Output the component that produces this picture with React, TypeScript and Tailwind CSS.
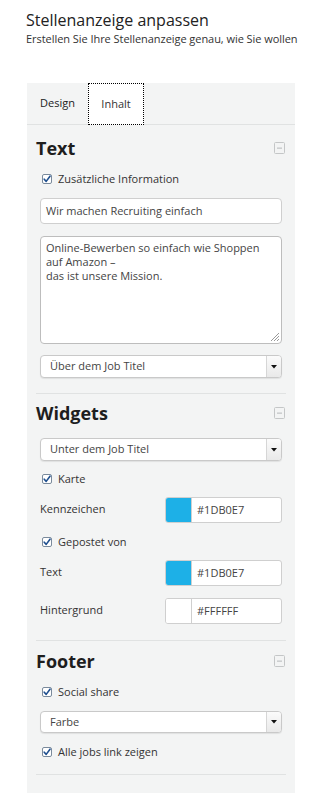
import React from "react";

const font = { fontFamily: '"Open Sans", "Liberation Sans", sans-serif' };

function Check({ label }: { label: string }) {
  return (
    <div className="flex items-center h-[16px] pl-[2px]">
      <svg width="10" height="10" viewBox="0 0 10 10" className="shrink-0">
        <rect x="0.5" y="0.5" width="9" height="9" rx="1.5" fill="#fff" stroke="#7a8a9c" />
        <path d="M2.2 5.2 L4.2 7.4 L8 2.2" fill="none" stroke="#1f4f8f" strokeWidth="1.6" strokeLinecap="round" strokeLinejoin="round" />
      </svg>
      <span className="ml-[6px] text-[11px] text-[#333]">{label}</span>
    </div>
  );
}

function Heading({ title }: { title: string }) {
  return (
    <div className="flex items-center justify-between h-[24px]">
      <span className="text-[18px] font-bold text-[#1e1e1e] leading-[24px]">{title}</span>
      <svg width="11" height="12" viewBox="0 0 11 12" className="mr-[1px]">
        <rect x="0.5" y="0.5" width="10" height="11" rx="1" fill="none" stroke="#c4c6c7" />
        <rect x="3" y="5.5" width="5" height="1.3" fill="#c4c6c7" />
      </svg>
    </div>
  );
}

function Select({ value, h = 23 }: { value: string; h?: number }) {
  return (
    <div
      className={`flex items-stretch mx-[4px] rounded-[4px] border border-[#c9c9c9] bg-white shadow-[0_1px_1px_rgba(0,0,0,0.08)] ${h === 22 ? "h-[22px]" : "h-[23px]"}`}
    >
      <div className="flex-1 flex items-center pl-[9px] text-[11px] text-[#444]">{value}</div>
      <div className="w-[15px] flex items-center justify-center border-l border-[#d6d6d6] bg-gradient-to-b from-[#fbfbfb] to-[#e9e9e9] rounded-r-[3px]">
        <svg width="6" height="4" viewBox="0 0 6 4">
          <path d="M0 0 L6 0 L3 3.5 Z" fill="#111" />
        </svg>
      </div>
    </div>
  );
}

function ColorRow({ label, color, value }: { label: string; color: string; value: string }) {
  return (
    <div className="flex items-center justify-between mx-[4px] h-[26px]">
      <span className="text-[11px] text-[#333] -mt-[1px]">{label}</span>
      <div className="flex w-[117px] h-[26px] rounded-[3px] border border-[#cfcfcf] bg-white overflow-hidden">
        <div className="w-[26px] border-r border-[#cfcfcf]" style={{ background: color }} />
        <div className="flex items-center pl-[5px] text-[11px] text-[#444]">{value}</div>
      </div>
    </div>
  );
}

export default function App() {
  return (
    <div className="w-[309px] h-[802px] bg-white" style={font}>
      <div className="pl-[26px] pt-[10px]">
        <div className="text-[16px] leading-[20px] text-[#222]">Stellenanzeige anpassen</div>
        <div className="text-[11px] leading-[15px] text-[#333] mt-[1px] tracking-[-0.05px]">
          Erstellen Sie Ihre Stellenanzeige genau, wie Sie wollen
        </div>
      </div>

      <div className="ml-[27px] w-[268px] mt-[37px] bg-[#f3f4f4] pb-[18px]">
        <div className="flex h-[42px] border-b border-[#e0e2e2]">
          <div className="w-[61px] flex items-center justify-center text-[11px] text-[#222]">Design</div>
          <div className="w-[56px] h-[42px] flex items-center justify-center bg-white border border-dotted border-black text-[11px] text-[#333]">
            Inhalt
          </div>
        </div>

        <div className="px-[9px]">
          {/* Text section */}
          <div className="pt-[11px]">
            <Heading title="Text" />
            <div className="mt-[11px] mx-[4px]">
              <Check label="Zusätzliche Information" />
            </div>
            <div className="mt-[11px] mx-[4px] h-[26px] rounded-[4px] border border-[#cfcfcf] bg-white flex items-center pl-[5px] text-[11px] text-[#444]">
              Wir machen Recruiting einfach
            </div>
            <div className="mt-[12px] mx-[4px] h-[108px] rounded-[4px] border border-[#bdbdbd] bg-white pl-[5px] pt-[4px] text-[11px] leading-[14px] text-[#444] relative">
              <div>Online-Bewerben so einfach wie Shoppen</div>
              <div>auf Amazon –</div>
              <div>das ist unsere Mission.</div>
              <svg width="10" height="10" viewBox="0 0 10 10" className="absolute right-[1px] bottom-[1px]">
                <path d="M9 1 L1 9 M9 4 L4 9 M9 7 L7 9" stroke="#9a9a9a" strokeWidth="1" />
              </svg>
            </div>
            <div className="mt-[11px]">
              <Select value="Über dem Job Titel" />
            </div>
            <div className="mt-[15px] border-t border-[#e0e2e2]" />
          </div>

          {/* Widgets */}
          <div className="pt-[7px]">
            <Heading title="Widgets" />
            <div className="mt-[13px]">
              <Select value="Unter dem Job Titel" />
            </div>
            <div className="mt-[10px] mx-[4px]">
              <Check label="Karte" />
            </div>
            <div className="mt-[10px]">
              <ColorRow label="Kennzeichen" color="#1DB0E7" value="#1DB0E7" />
            </div>
            <div className="mt-[11px] mx-[4px]">
              <Check label="Gepostet von" />
            </div>
            <div className="mt-[10px]">
              <ColorRow label="Text" color="#1DB0E7" value="#1DB0E7" />
            </div>
            <div className="mt-[12px]">
              <ColorRow label="Hintergrund" color="#FFFFFF" value="#FFFFFF" />
            </div>
            <div className="mt-[16px] border-t border-[#e0e2e2]" />
          </div>

          {/* Footer */}
          <div className="pt-[8px]">
            <Heading title="Footer" />
            <div className="mt-[11px] mx-[4px]">
              <Check label="Social share" />
            </div>
            <div className="mt-[11px]">
              <Select value="Farbe" h={22} />
            </div>
            <div className="mt-[11px] mx-[4px]">
              <Check label="Alle jobs link zeigen" />
            </div>
            <div className="mt-[14px] border-t border-[#e0e2e2]" />
          </div>
        </div>
      </div>
    </div>
  );
}
